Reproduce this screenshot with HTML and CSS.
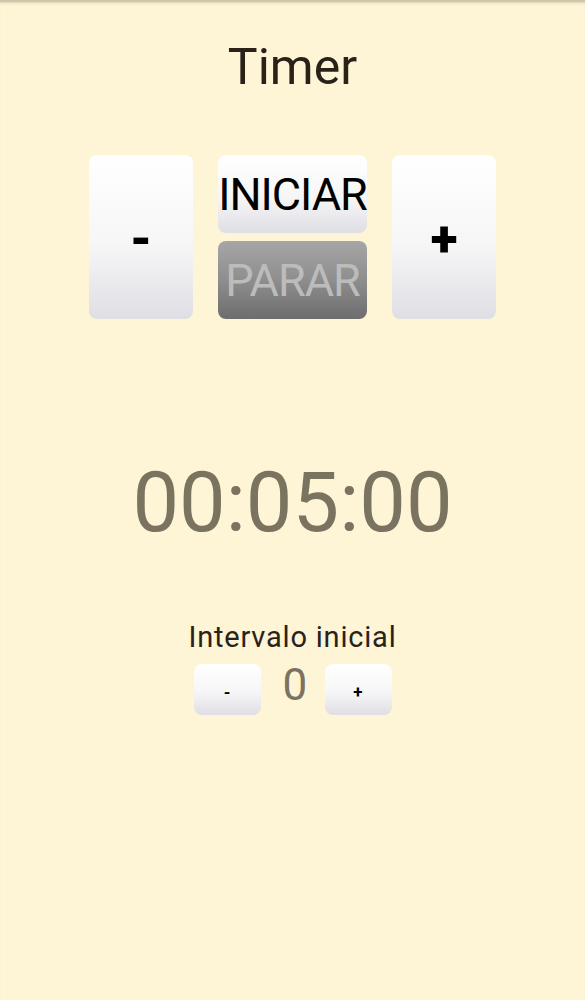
FILE: index.html
```html
<!DOCTYPE html>
<html>
<head>
<meta charset="utf-8">
<link rel="stylesheet" href="styles.css">
</head>
<body>
<div class="screen">
  <h1 class="title">Timer</h1>
  <div class="controls">
    <div class="btn big">-</div>
    <div class="mid">
      <div class="btn start">INICIAR</div>
      <div class="btn stop">PARAR</div>
    </div>
    <div class="btn big">+</div>
  </div>
  <div class="clock">00:05:00</div>
  <div class="interval-label">Intervalo inicial</div>
  <div class="interval">
    <div class="btn small">-</div>
    <div class="value">0</div>
    <div class="btn small">+</div>
  </div>
</div>
</body>
</html>
```
FILE: styles.css
```css
html, body {
  margin: 0;
  padding: 0;
}
body {
  background: #fdf5d5;
  font-family: Roboto, "Noto Sans", sans-serif;
  width: 585px;
  height: 1000px;
  overflow: hidden;
}
.screen {
  border-top: 2px solid #cfc7ad;
  box-shadow: inset 0 3px 3px -2px rgba(150, 140, 110, 0.35);
  height: 998px;
  display: flex;
  flex-direction: column;
  align-items: center;
}
.title {
  margin: 35px 0 0;
  font-weight: 400;
  font-size: 50px;
  line-height: 60px;
  color: #2a2219;
}
.controls {
  margin-top: 58px;
  display: flex;
  gap: 25px;
}
.btn {
  display: flex;
  align-items: center;
  justify-content: center;
  border-radius: 8px;
  background: linear-gradient(to bottom, #ffffff 0%, #f6f6f7 55%, #dfdee4 100%);
  color: #000;
}
.big {
  width: 104px;
  height: 164px;
  font-size: 50px;
  font-weight: 900;
  padding-top: 4px;
  box-sizing: border-box;
}
.mid {
  width: 149px;
  display: flex;
  flex-direction: column;
  gap: 8px;
}
.start, .stop {
  height: 78px;
  font-size: 45px;
  letter-spacing: -1px;
}
.stop {
  background: linear-gradient(to bottom, #a6a6a6 0%, #8e8e8e 50%, #6d6d6d 100%);
  color: #bcbcbc;
}
.clock {
  margin-top: 134px;
  font-size: 83px;
  line-height: 100px;
  color: #7a7360;
}
.interval-label {
  margin-top: 67px;
  font-size: 29px;
  letter-spacing: 0.8px;
  line-height: 34px;
  color: #2a2219;
}
.interval {
  margin-top: 10px;
  display: flex;
  align-items: center;
  gap: 22px;
}
.small {
  width: 67px;
  height: 51px;
  font-size: 17px;
  font-weight: 700;
  padding-top: 4px;
  box-sizing: border-box;
}
.value {
  width: 20px;
  text-align: center;
  font-size: 44px;
  line-height: 51px;
  color: #7a7360;
  margin-top: -8px;
}
```
